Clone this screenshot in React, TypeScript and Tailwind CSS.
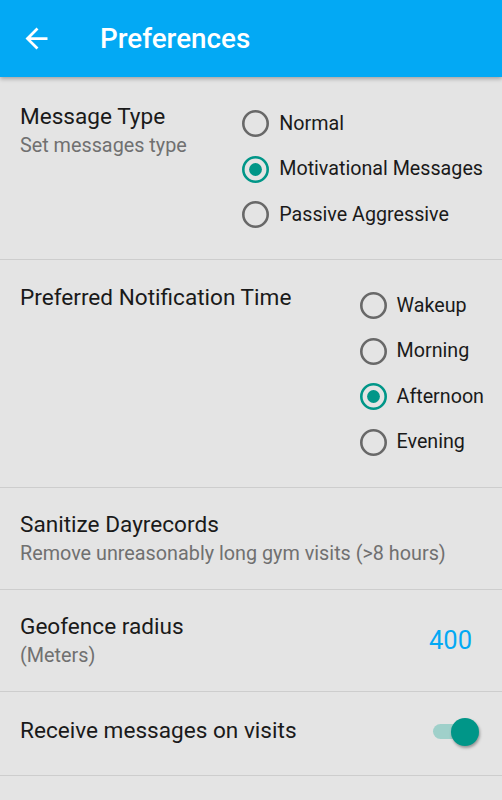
import React from "react";

// Preferences screen — Android-style settings list with radio groups.

const font = { fontFamily: "Roboto, 'Noto Sans', sans-serif" };

function Radio({ label, checked }: { label: string; checked?: boolean }) {
  return (
    <div className="flex h-[45.5px] items-center">
      <svg width="27" height="27" viewBox="0 0 27 27" className="shrink-0">
        <circle
          cx="13.5"
          cy="13.5"
          r="12.2"
          fill="none"
          stroke={checked ? "#009688" : "#686868"}
          strokeWidth="2.6"
        />
        {checked && <circle cx="13.5" cy="13.5" r="6.4" fill="#009688" />}
      </svg>
      <span className="ml-[10px] text-[19.7px] leading-none text-[#1a1a1a]">{label}</span>
    </div>
  );
}

function Divider() {
  return <div className="h-px bg-[#cdcdcd]" />;
}

export default function App() {
  return (
    <div className="min-h-[800px] w-[502px] bg-[#e4e4e4]" style={font}>
      {/* App bar */}
      <header className="relative z-10 flex h-[77px] items-center bg-[#03a9f4] pl-[20px] shadow-[0_2px_4px_rgba(0,0,0,0.28)]">
        <svg width="33" height="33" viewBox="0 0 24 24" fill="#ffffff">
          <path d="M20 11H7.83l5.59-5.59L12 4l-8 8 8 8 1.41-1.41L7.83 13H20v-2z" />
        </svg>
        <h1 className="ml-[47px] text-[27.8px] font-medium text-white">Preferences</h1>
      </header>

      {/* Message type */}
      <section className="flex justify-between pb-[21px] pl-[20px] pr-[19px] pt-[24px]">
        <div className="pt-[1px]">
          <div className="text-[22.6px] leading-[29px] text-[#1a1a1a]">Message Type</div>
          <div className="text-[19.8px] leading-[29px] text-[#707070]">Set messages type</div>
        </div>
        <div className="flex flex-col">
          <Radio label="Normal" />
          <Radio label="Motivational Messages" checked />
          <Radio label="Passive Aggressive" />
        </div>
      </section>
      <Divider />

      {/* Notification time */}
      <section className="flex justify-between pb-[21.5px] pl-[20px] pr-[18px] pt-[23.5px]">
        <div className="text-[22.6px] leading-[29px] text-[#1a1a1a]">
          Preferred Notification Time
        </div>
        <div className="flex flex-col">
          <Radio label="Wakeup" />
          <Radio label="Morning" />
          <Radio label="Afternoon" checked />
          <Radio label="Evening" />
        </div>
      </section>
      <Divider />

      {/* Sanitize */}
      <section className="pb-[21px] pl-[20px] pr-[18px] pt-[22px]">
        <div className="text-[22.6px] leading-[29px] text-[#1a1a1a]">Sanitize Dayrecords</div>
        <div className="text-[19.8px] leading-[29px] text-[#707070]">
          Remove unreasonably long gym visits (&gt;8 hours)
        </div>
      </section>
      <Divider />

      {/* Geofence */}
      <section className="flex items-center justify-between pb-[21px] pl-[20px] pr-[30px] pt-[22px]">
        <div>
          <div className="text-[22.6px] leading-[29px] text-[#1a1a1a]">Geofence radius</div>
          <div className="text-[19.8px] leading-[29px] text-[#707070]">(Meters)</div>
        </div>
        <div className="text-[25.5px] leading-none text-[#03a9f4]">400</div>
      </section>
      <Divider />

      {/* Receive messages toggle */}
      <section className="flex h-[83px] items-start justify-between pl-[20px] pr-[23px] pt-[24px]">
        <div className="text-[22.6px] leading-[29px] text-[#1a1a1a]">Receive messages on visits</div>
        <div className="relative mt-[2px] flex h-[28px] w-[46px] items-center">
          <div className="h-[15px] w-[44px] rounded-full bg-[#9fd0ca]" />
          <div className="absolute right-0 top-0 h-[28px] w-[28px] rounded-full bg-[#009688] shadow-[1px_2px_3px_rgba(0,0,0,0.35)]" />
        </div>
      </section>
      <Divider />
    </div>
  );
}
